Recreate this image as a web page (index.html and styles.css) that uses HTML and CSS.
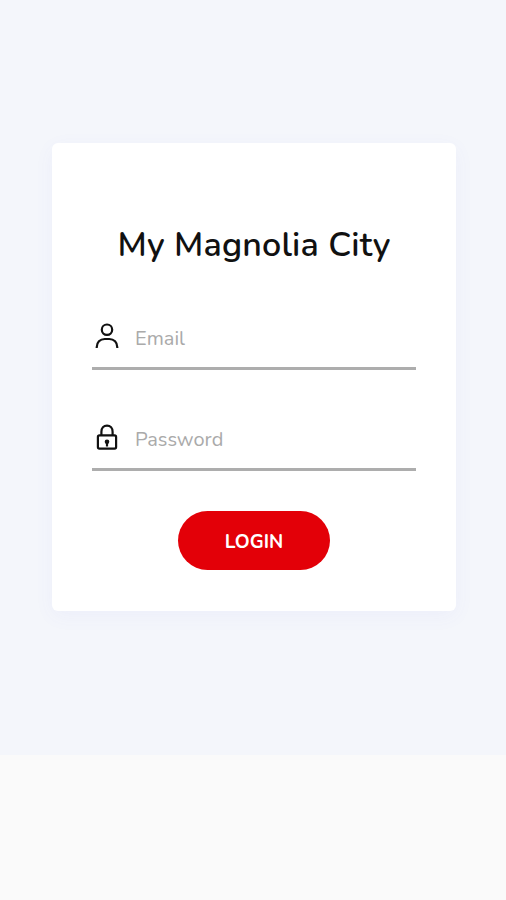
FILE: index.html
```html
<!DOCTYPE html>
<html lang="en">
<head>
  <meta charset="UTF-8">
  <meta name="viewport" content="width=device-width, initial-scale=1.0">
  <title>My Magnolia City</title>
  <link rel="stylesheet" href="styles.css">
</head>
<body>
  <main class="login-page">
    <form class="login-card">
      <h1 class="login-title">My Magnolia City</h1>
      <label class="field">
        <svg class="field-icon" viewBox="0 0 28 28">
          <circle cx="14" cy="7.7" r="5.2"/>
          <path d="M3.7 26v-.8c0-4.9 3.3-8.2 8-8.2h4.6c4.7 0 8 3.3 8 8.2v.8"/>
        </svg>
        <input class="field-input" type="email" placeholder="Email">
      </label>
      <label class="field">
        <svg class="field-icon" viewBox="0 0 28 28">
          <rect x="4.9" y="12.4" width="18.2" height="13.2" rx="1.5"/>
          <path d="M8.4 12.4V8.8c0-3.6 2.3-6.2 5.6-6.2s5.6 2.6 5.6 6.2v3.6M14 18v5.6"/>
          <circle class="keyhole" cx="14" cy="18.7" r="2.3"/>
        </svg>
        <input class="field-input" type="password" placeholder="Password">
      </label>
      <button class="login-button" type="button">LOGIN</button>
    </form>
  </main>
</body>
</html>
```
FILE: styles.css
```css
* {
  box-sizing: border-box;
}

body {
  margin: 0;
  min-height: 100vh;
  background: #fafafa;
  font-family: Nunito, Lato, sans-serif;
}

.login-page {
  height: 755px;
  padding: 143px 50px 0 52px;
  background: #f4f6fb;
}

.login-card {
  display: flex;
  flex-direction: column;
  align-items: center;
  height: 468px;
  padding: 79px 40px 40px;
  background: #fff;
  border-radius: 6px;
  box-shadow: 0 5px 20px rgba(90, 100, 240, 0.05);
}

.login-title {
  margin: 0 0 35px;
  font-size: 34px;
  font-weight: 600;
  line-height: 46px;
  letter-spacing: 0.2px;
  white-space: nowrap;
  color: #111;
}

.field {
  display: flex;
  align-items: center;
  width: 100%;
  height: 67px;
  margin-bottom: 34px;
  padding: 0 0 0 1px;
  border-bottom: 3px solid #adadad;
}

.field-icon {
  width: 28px;
  height: 28px;
  margin-top: 2px;
  fill: none;
  stroke: #111;
  stroke-width: 2.2;
}

.keyhole {
  fill: #111;
  stroke: none;
}

.field-input {
  flex: 1;
  min-width: 0;
  padding: 6px 0 0 14px;
  border: 0;
  outline: 0;
  background: none;
  font-family: inherit;
  font-size: 20px;
}

.field-input::placeholder {
  color: #aaa;
}

.login-button {
  width: 152px;
  height: 59px;
  margin-top: 6px;
  padding: 2px 0 0;
  border: 0;
  border-radius: 30px;
  background: #e30008;
  color: #fff;
  font-family: inherit;
  font-size: 19px;
  font-weight: 700;
}
```
